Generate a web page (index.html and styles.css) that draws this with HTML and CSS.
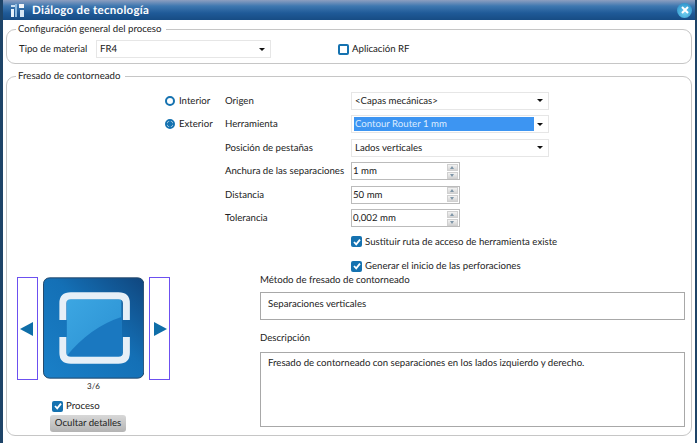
FILE: index.html
```html
<!DOCTYPE html>
<html lang="es">
<head>
    <meta charset="UTF-8">
    <meta name="viewport" content="width=device-width, initial-scale=1.0">
    <title>Diálogo de tecnología</title>
    <link rel="stylesheet" href="styles.css">
</head>
<body>
    <div class="dialog">
        <div class="title-bar">
            <svg class="app-icon" width="15" height="15" viewBox="0 0 15 15">
                <rect x="1" y="6" width="3" height="8" fill="#e8f2fa"/>
                <rect x="5" y="1" width="2" height="13" fill="#8fbbe0"/>
                <rect x="9" y="1" width="5" height="4" fill="#f2f6fa"/>
                <rect x="10" y="7" width="4" height="7" fill="#d6e6f4"/>
                <rect x="1" y="2" width="4" height="2" fill="#cfe2f2"/>
            </svg>
            <span class="title-text">Diálogo de tecnología</span>
            <span class="close-btn">
                <svg width="8" height="8" viewBox="0 0 8 8"><path d="M1 1 7 7M7 1 1 7" stroke="#fff" stroke-width="2"/></svg>
            </span>
        </div>

        <div class="dialog-body">
            <fieldset class="group general-group">
                <legend>Configuración general del proceso</legend>
                <div class="general-row">
                    <span class="general-label">Tipo de material</span>
                    <div class="combo material-combo"><span class="combo-text">FR4</span><span class="combo-arrow"></span></div>
                    <span class="check rf-check"><span class="box box-empty"></span>Aplicación RF</span>
                </div>
            </fieldset>

            <fieldset class="group router-group">
                <legend>Fresado de contorneado</legend>
                <div class="router-top">
                    <div class="side-radios">
                        <div class="radio-row"><span class="radio"></span>Interior</div>
                        <div class="radio-row"><span class="radio radio-on"></span>Exterior</div>
                    </div>
                    <div class="form-grid">
                        <span>Origen</span>
                        <div class="combo"><span class="combo-text">&lt;Capas mecánicas&gt;</span><span class="combo-arrow"></span></div>
                        <span>Herramienta</span>
                        <div class="combo combo-active"><span class="combo-text">Contour Router 1 mm</span><span class="combo-arrow"></span></div>
                        <span>Posición de pestañas</span>
                        <div class="combo"><span class="combo-text">Lados verticales</span><span class="combo-arrow"></span></div>
                        <span class="nowrap">Anchura de las separaciones</span>
                        <div class="spinner"><span class="spinner-text">1 mm</span><span class="spin-btns"><i class="up"></i><i class="down"></i></span></div>
                        <span>Distancia</span>
                        <div class="spinner"><span class="spinner-text">50 mm</span><span class="spin-btns"><i class="up"></i><i class="down"></i></span></div>
                        <span>Tolerancia</span>
                        <div class="spinner"><span class="spinner-text">0,002 mm</span><span class="spin-btns"><i class="up"></i><i class="down"></i></span></div>
                        <span class="check form-check"><span class="box"><svg width="10" height="10" viewBox="0 0 10 10"><path d="M2 5 4.2 7.4 8 2.6" fill="none" stroke="#fff" stroke-width="1.8"/></svg></span>Sustituir ruta de acceso de herramienta existe</span>
                        <span class="check form-check"><span class="box"><svg width="10" height="10" viewBox="0 0 10 10"><path d="M2 5 4.2 7.4 8 2.6" fill="none" stroke="#fff" stroke-width="1.8"/></svg></span>Generar el inicio de las perforaciones</span>
                    </div>
                </div>

                <div class="router-bottom">
                    <div class="preview">
                        <div class="carousel">
                            <div class="nav-btn"><svg width="14" height="14" viewBox="0 0 14 14"><path d="M13 0V14L0 7Z" fill="#0f6ea8"/></svg></div>
                            <svg class="method-icon" width="102" height="102" viewBox="0 0 102 102">
                                <defs>
                                    <linearGradient id="tile" x1="0" y1="1" x2="1" y2="0">
                                        <stop offset="0" stop-color="#1a80c8"/>
                                        <stop offset="0.55" stop-color="#1470b6"/>
                                        <stop offset="1" stop-color="#10467e"/>
                                    </linearGradient>
                                    <linearGradient id="inner" x1="0" y1="0" x2="1" y2="1">
                                        <stop offset="0" stop-color="#3ca6e2"/>
                                        <stop offset="1" stop-color="#2a90d2"/>
                                    </linearGradient>
                                </defs>
                                <rect x="0.5" y="0.5" width="101" height="101" rx="6" fill="url(#tile)" stroke="#24486a"/>
                                <rect x="24" y="22" width="55" height="58" fill="url(#inner)"/>
                                <path d="M24 79Q48 50 79 40V80H24Z" fill="#1a78c0"/>
                                <path d="M20 43V26Q20 18.500 28 18.500H76Q84 18.500 84 26V43" fill="none" stroke="#e6eff7" stroke-width="7"/>
                                <path d="M20 60V76Q20 83.500 28 83.500H76Q84 83.500 84 76V60" fill="none" stroke="#e6eff7" stroke-width="7"/>
                            </svg>
                            <div class="nav-btn"><svg width="14" height="14" viewBox="0 0 14 14"><path d="M1 0V14L14 7Z" fill="#0f6ea8"/></svg></div>
                        </div>
                        <div class="page-count">3/6</div>
                        <div class="preview-actions">
                            <span class="check"><span class="box"><svg width="10" height="10" viewBox="0 0 10 10"><path d="M2 5 4.2 7.4 8 2.6" fill="none" stroke="#fff" stroke-width="1.8"/></svg></span>Proceso</span>
                            <div class="details-btn">Ocultar detalles</div>
                        </div>
                    </div>
                    <div class="details">
                        <div class="details-label">Método de fresado de contorneado</div>
                        <div class="text-box method-box">Separaciones verticales</div>
                        <div class="details-label desc-label">Descripción</div>
                        <div class="text-box desc-box">Fresado de contorneado con separaciones en los lados izquierdo y derecho.</div>
                    </div>
                </div>
            </fieldset>
        </div>
    </div>
</body>
</html>
```

FILE: styles.css
```css
* {
    box-sizing: border-box;
}
body {
    margin: 0;
    font-family: Lato, "Noto Sans", sans-serif;
    font-size: 9.65px;
    text-rendering: geometricPrecision;
    color: #222222;
    background-color: #ffffff;
}
.dialog {
    width: 697px;
    height: 443px;
    overflow: hidden;
    border-left: 3px solid #1e4468;
    border-right: 2px solid #1e4468;
}
.title-bar {
    height: 20px;
    margin: 0 -2px 0 -3px;
    padding: 0 5px 0 10px;
    display: flex;
    align-items: center;
    background: linear-gradient(to bottom, #8d9fc0 0%, #3f78b0 30%, #1f5a98 65%, #174c84 100%);
}
.app-icon {
    margin-right: 7px;
}
.title-text {
    flex: 1;
    color: #ffffff;
    font-size: 11.5px;
    font-weight: 700;
    letter-spacing: 0.3px;
}
.close-btn {
    width: 15px;
    height: 15px;
    border-radius: 50%;
    display: flex;
    align-items: center;
    justify-content: center;
    background: radial-gradient(circle at 50% 65%, #6fd0f0, #1f86c4);
}
.dialog-body {
    padding: 2px 3px 0 3px;
}
.group {
    margin: 0;
    padding: 0;
    border: 1px solid #c6c6c6;
    border-radius: 9px;
    min-width: 0;
}
.group legend {
    margin-left: 9px;
    padding: 0 5px 0 2px;
    line-height: 14px;
}
.general-group {
    height: 42px;
}
.general-row {
    display: flex;
    align-items: center;
    height: 26px;
    padding-left: 12px;
}
.general-label {
    width: 77px;
}
.combo {
    display: flex;
    align-items: center;
    width: 198px;
    height: 18px;
    padding: 2px;
    background-color: #ffffff;
    border: 1px solid #e6e6e6;
}
.material-combo {
    width: 175px;
}
.combo-text {
    flex: 1;
    padding-left: 1px;
    line-height: 14px;
}
.combo-active .combo-text {
    flex: 0 0 180px;
    background-color: #3d95f2;
    color: #dcecff;
}
.combo-arrow {
    width: 0;
    height: 0;
    margin: 0 3px 0 auto;
    border-left: 3.5px solid transparent;
    border-right: 3.5px solid transparent;
    border-top: 3.5px solid #111111;
}
.check {
    display: flex;
    align-items: center;
}
.box {
    width: 11px;
    height: 11px;
    margin-right: 3px;
    border-radius: 2px;
    background-color: #1572b0;
    display: flex;
    align-items: center;
    justify-content: center;
    flex: none;
}
.box-empty {
    background-color: #ffffff;
    border: 2px solid #1572b0;
}
.rf-check {
    margin-left: 67px;
}
.router-group {
    height: 367px;
    margin-top: 5px;
}
.router-top {
    display: flex;
    padding: 6px 0 0 158px;
    height: 190px;
}
.side-radios {
    width: 60px;
}
.radio-row {
    display: flex;
    align-items: center;
    height: 23.5px;
}
.radio {
    width: 10px;
    height: 10px;
    margin-right: 4px;
    border: 2px solid #1572b0;
    border-radius: 50%;
    background-color: #ffffff;
}
.radio-on {
    background: radial-gradient(circle, #1572b0 0 2.5px, #ffffff 3px);
}
.form-grid {
    display: grid;
    grid-template-columns: 126px 198px;
    grid-template-rows: repeat(7, 23.5px) 25.5px;
    align-items: center;
}
.nowrap {
    white-space: nowrap;
}
.spinner {
    display: flex;
    align-items: center;
    width: 109px;
    height: 18px;
    border: 1px solid #bbbbbb;
    background-color: #ffffff;
}
.spinner-text {
    flex: 1;
    padding-left: 1px;
}
.spin-btns {
    display: flex;
    flex-direction: column;
    gap: 1px;
    width: 11px;
    margin-right: 1px;
}
.spin-btns i {
    display: block;
    height: 7px;
    background: linear-gradient(to bottom, #f2f2f2, #d4d4d4);
    border: 1px solid #d0d0d0;
    position: relative;
}
.spin-btns i::after {
    content: "";
    position: absolute;
    left: 2px;
    width: 0;
    height: 0;
    border-left: 2.5px solid transparent;
    border-right: 2.5px solid transparent;
}
.spin-btns .up::after {
    top: 1px;
    border-bottom: 3px solid #7f96a8;
}
.spin-btns .down::after {
    top: 1px;
    border-top: 3px solid #7f96a8;
}
.form-check {
    grid-column: 1 / 3;
    margin-left: 126px;
    white-space: nowrap;
}
.router-bottom {
    display: flex;
    align-items: flex-start;
}
.preview {
    width: 253px;
    padding: 4px 0 0 10px;
}
.carousel {
    display: flex;
    gap: 5px;
    width: 153px;
}
.nav-btn {
    width: 21px;
    height: 103px;
    border: 1px solid #6c50f0;
    display: flex;
    align-items: center;
    justify-content: center;
}
.page-count {
    width: 153px;
    margin-top: 1px;
    font-size: 8px;
    line-height: 10px;
    text-align: center;
}
.preview-actions {
    padding: 9px 0 0 35px;
}
.details-btn {
    width: 76px;
    height: 17px;
    margin: 3px 0 0 -2px;
    line-height: 17px;
    text-align: center;
    border-radius: 3px;
    background: linear-gradient(to bottom, #d8d8d8, #b4b4b4);
}
.details {
    width: 425px;
}
.details-label {
    line-height: 14px;
}
.text-box {
    border: 1px solid #a8a8a8;
    padding: 3px 7px;
    line-height: 14px;
}
.method-box {
    height: 28px;
    margin-top: 5px;
    padding-top: 4px;
}
.desc-label {
    margin-top: 11px;
}
.desc-box {
    height: 75px;
    margin-top: 7px;
}
```
